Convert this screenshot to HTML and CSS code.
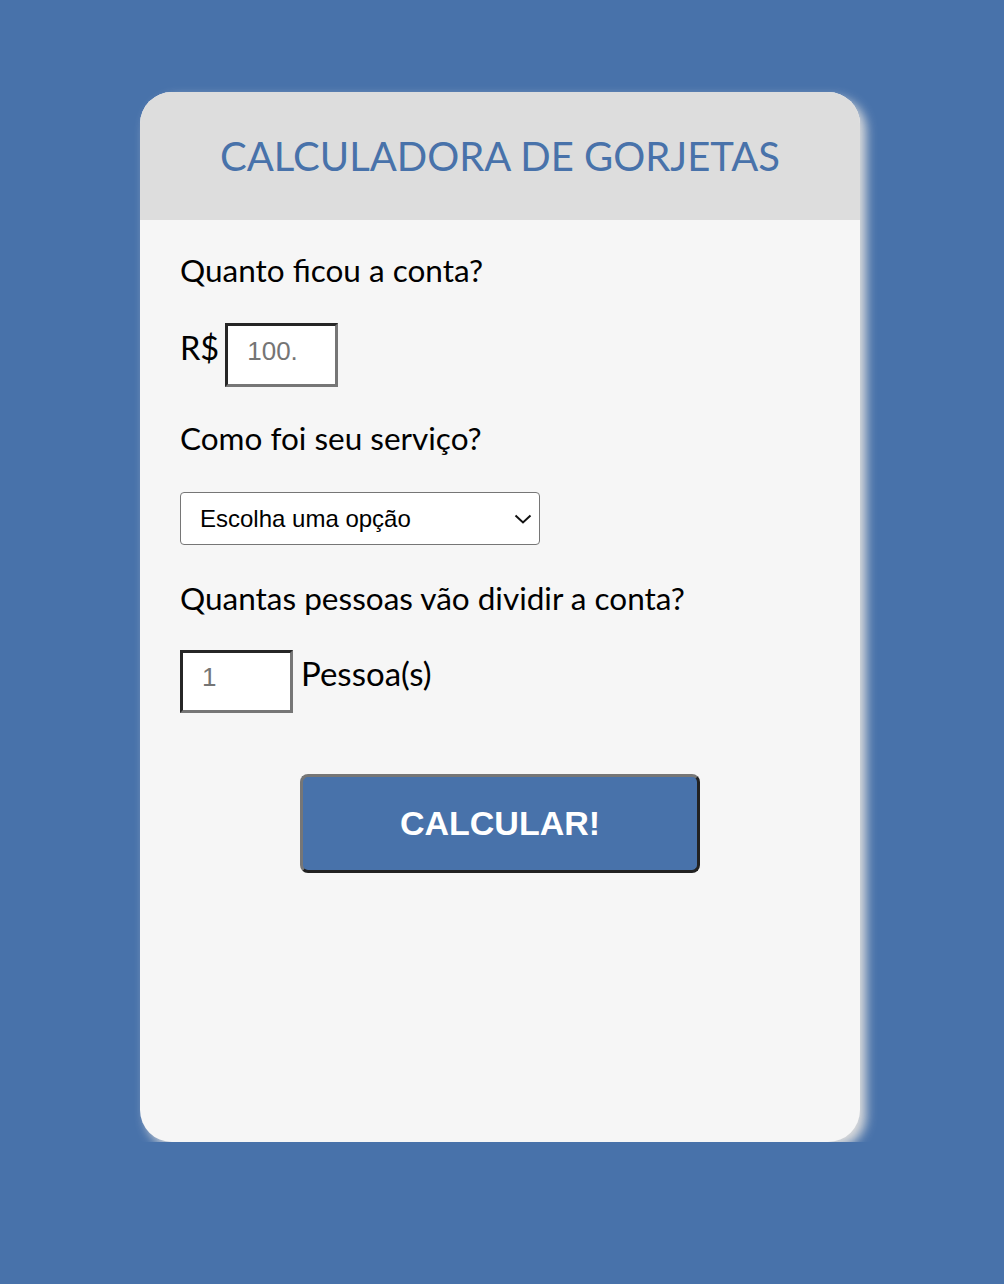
FILE: index.html
```html
<!DOCTYPE html>
<html lang="pt-BR">
<head>
<meta charset="utf-8">
<title>Calculadora de Gorjetas</title>
<link rel="stylesheet" href="styles.css">
</head>
<body>
<div class="card">
  <header class="card-header">
    <h1 class="title">CALCULADORA DE GORJETAS</h1>
  </header>
  <main class="card-body">
    <p class="label label-bill">Quanto ficou a conta?</p>
    <div class="row row-bill">
      <span class="row-text row-text-before">R$</span>
      <input class="field" type="text" placeholder="100.">
    </div>
    <p class="label label-service">Como foi seu serviço?</p>
    <div class="select-wrap">
      <select class="select">
        <option>Escolha uma opção</option>
      </select>
      <svg class="chevron" width="18" height="10" viewBox="0 0 18 10" aria-hidden="true">
        <path d="M1.5 1.5 L9 8.5 L16.5 1.5" fill="none" stroke="#111" stroke-width="2"/>
      </svg>
    </div>
    <p class="label label-people">Quantas pessoas vão dividir a conta?</p>
    <div class="row row-people">
      <input class="field" type="text" placeholder="1">
      <span class="row-text row-text-after">Pessoa(s)</span>
    </div>
    <div class="actions">
      <button class="button" type="button">CALCULAR!</button>
    </div>
  </main>
</div>
</body>
</html>
```
FILE: styles.css
```css
html, body {
  margin: 0;
  padding: 0;
}
body {
  background: #4872aa;
  font-family: Lato, "Liberation Sans", sans-serif;
  padding-top: 92px;
}
.card {
  width: 720px;
  height: 1050px;
  margin: 0 0 0 140px;
  background: #f6f6f6;
  border-radius: 32px;
  overflow: hidden;
  box-shadow: 6px 6px 11px #dcdcdc;
  display: flex;
  flex-direction: column;
}
.card-header {
  height: 128px;
  background: #dddddd;
  display: flex;
  align-items: center;
  justify-content: center;
  flex-shrink: 0;
}
.title {
  margin: 0;
  font-family: Lato, sans-serif;
  font-weight: 400;
  font-size: 40px;
  line-height: 48px;
  color: #4872aa;
}
.card-body {
  padding: 31.6px 40px 0;
  display: flex;
  flex-direction: column;
  align-items: flex-start;
}
.label {
  margin: 0;
  font-size: 31.5px;
  line-height: 37.8px;
  color: #000;
}
.label-service { margin-top: 32.9px; }
.label-people { margin-top: 34.6px; }
.row {
  display: flex;
  align-items: flex-start;
}
.row-bill { margin-top: 33.6px; }
.row-people { margin-top: 32.6px; }
.row-text {
  color: #000;
}
.row-text-before {
  font-size: 32.5px;
  line-height: 39px;
  margin-top: 4.9px;
  margin-right: 6px;
}
.row-text-after {
  font-size: 33px;
  line-height: 39.6px;
  margin-top: 4.1px;
  margin-left: 8px;
}
.field {
  box-sizing: border-box;
  width: 113px;
  height: 64px;
  margin: 0;
  padding: 0 19px 6px;
  border: 3px solid;
  border-color: #262626 #767676 #767676 #262626;
  background: #fff;
  font-family: "Liberation Sans", Arial, sans-serif;
  font-size: 26px;
  color: #000;
  outline: none;
}
.row-people .field {
  height: 63px;
  padding-bottom: 8px;
}
.field::placeholder {
  color: #757575;
}
.select-wrap {
  position: relative;
  margin-top: 34.3px;
}
.select {
  appearance: none;
  -webkit-appearance: none;
  box-sizing: border-box;
  width: 360px;
  height: 53px;
  margin: 0;
  padding: 0 0 0 19px;
  border: 1px solid #767676;
  border-radius: 4px;
  background: #fff;
  font-family: "Liberation Sans", Arial, sans-serif;
  font-size: 24px;
  color: #000;
}
.chevron {
  position: absolute;
  right: 8px;
  top: 22px;
}
.actions {
  align-self: stretch;
  display: flex;
  justify-content: center;
  margin-top: 61px;
}
.button {
  box-sizing: border-box;
  width: 400px;
  height: 99px;
  margin: 0;
  border: 3px solid;
  border-color: #767676 #222 #222 #767676;
  border-radius: 8px;
  background: #4872aa;
  color: #fff;
  font-family: "Liberation Sans", Arial, sans-serif;
  font-weight: 700;
  font-size: 34px;
  cursor: pointer;
}
```
